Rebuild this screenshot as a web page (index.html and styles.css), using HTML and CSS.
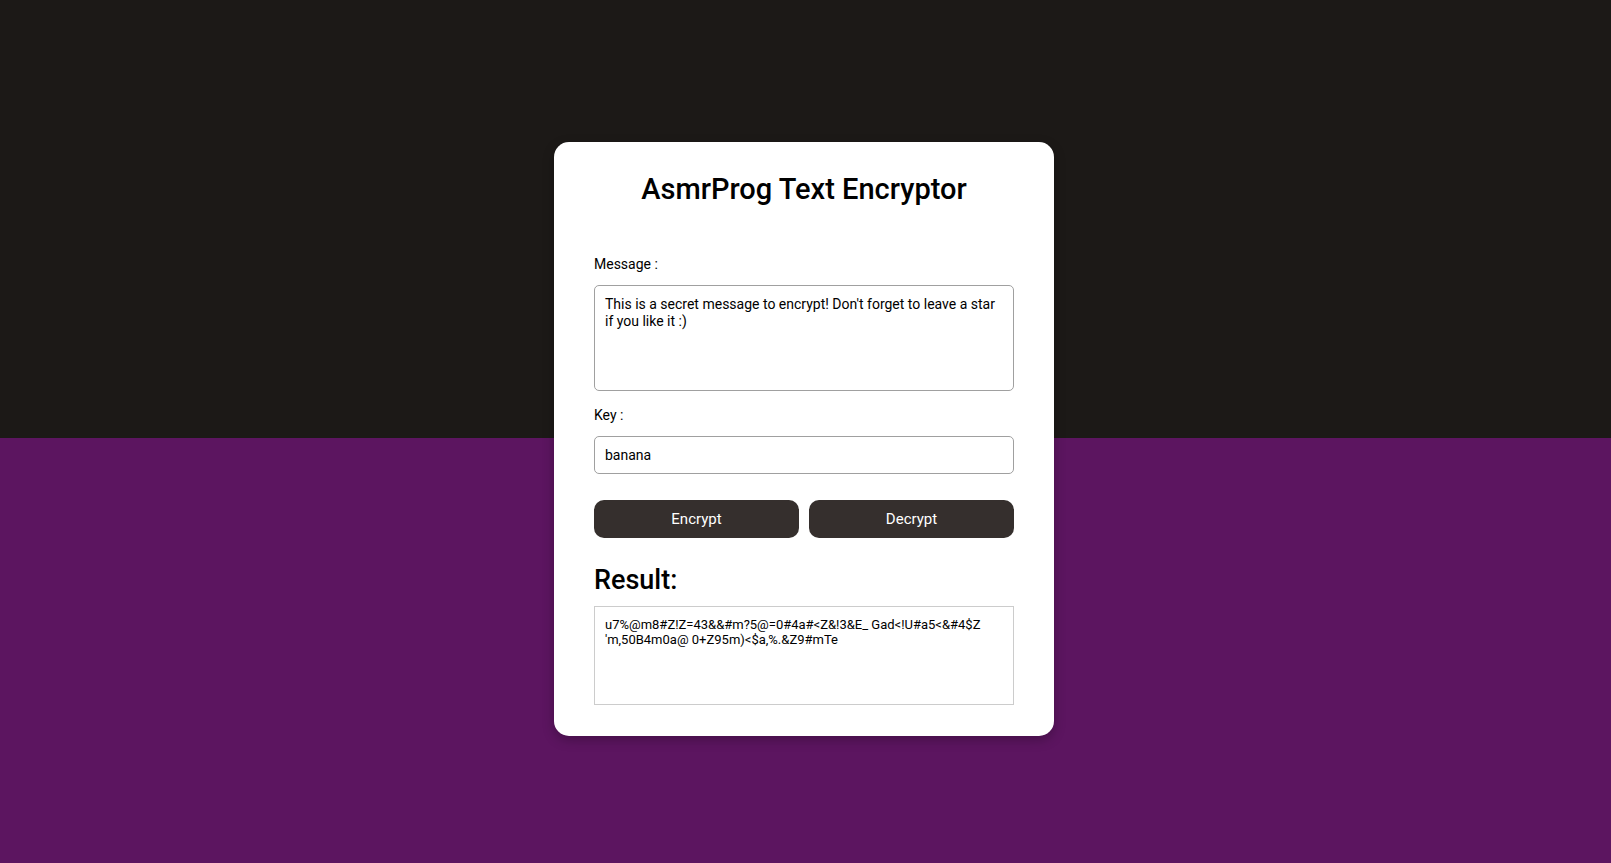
FILE: index.html
```html
<!DOCTYPE html>
<html lang="en">
<head>
<meta charset="utf-8">
<title>AsmrProg Text Encryptor</title>
<link rel="stylesheet" href="styles.css">
</head>
<body>
<div class="page">
  <div class="card">
    <h1 class="title">AsmrProg Text Encryptor</h1>
    <label class="label" for="msg">Message :</label>
    <textarea id="msg" class="message">This is a secret message to encrypt! Don't forget to leave a star if you like it :)</textarea>
    <label class="label" for="key">Key :</label>
    <input id="key" class="key" type="text" value="banana">
    <div class="buttons">
      <button class="btn">Encrypt</button>
      <button class="btn">Decrypt</button>
    </div>
    <h2 class="result-title">Result:</h2>
    <div class="result">u7%@m8#Z!Z=43&amp;&amp;#m?5@=0#4a#&lt;Z&amp;!3&amp;E_ Gad&lt;!U#a5&lt;&amp;#4$Z 'm,50B4m0a@ 0+Z95m)&lt;$a,%.&amp;Z9#mTe</div>
  </div>
</div>
</body>
</html>
```

FILE: styles.css
```css
* { box-sizing: border-box; }
html, body { margin: 0; padding: 0; }
body {
  font-family: Roboto, "Liberation Sans", sans-serif;
  background: linear-gradient(to bottom, #1c1917 0, #1c1917 438px, #5c1560 438px, #5c1560 100%);
  min-height: 100vh;
}
.page {
  height: 863px;
  display: flex;
  align-items: center;
  justify-content: center;
  padding: 15px 3px 0 0;
}
.card {
  width: 500px;
  background: #fff;
  border-radius: 15px;
  padding: 30px 40px 31px;
  display: flex;
  flex-direction: column;
  box-shadow: 0 4px 12px rgba(0, 0, 0, 0.25);
}
.title {
  margin: 0 0 50px;
  font-size: 29px;
  line-height: 34px;
  font-weight: 500;
  text-align: center;
  color: #000;
}
.label {
  display: block;
  font-size: 14px;
  line-height: 17px;
  color: #000;
  margin-bottom: 12px;
}
.message {
  display: block;
  width: 420px;
  height: 106px;
  border: 1px solid #a0a0a0;
  border-radius: 5px;
  padding: 10px 10px 8px;
  font-family: Roboto, "Liberation Sans", sans-serif;
  font-size: 14px;
  line-height: 17px;
  color: #000;
  resize: none;
  margin: 0 0 16px;
  outline: none;
}
.key {
  display: block;
  width: 420px;
  height: 38px;
  border: 1px solid #a0a0a0;
  border-radius: 5px;
  padding: 0 10px;
  font-family: Roboto, "Liberation Sans", sans-serif;
  font-size: 14px;
  color: #000;
  margin: 0 0 26px;
  outline: none;
}
.buttons {
  display: flex;
  gap: 10px;
}
.btn {
  flex: 1;
  height: 38px;
  border: none;
  border-radius: 10px;
  background: #352f2d;
  color: #fff;
  font-family: Roboto, "Liberation Sans", sans-serif;
  font-size: 15px;
  font-weight: 400;
  cursor: pointer;
}
.result-title {
  margin: 27px 0 10px;
  font-size: 27px;
  line-height: 31px;
  font-weight: 500;
  color: #000;
}
.result {
  width: 420px;
  height: 99px;
  border: 1px solid #ccc;
  padding: 10px;
  font-size: 13px;
  line-height: 15px;
  color: #000;
  overflow-wrap: break-word;
}
```
